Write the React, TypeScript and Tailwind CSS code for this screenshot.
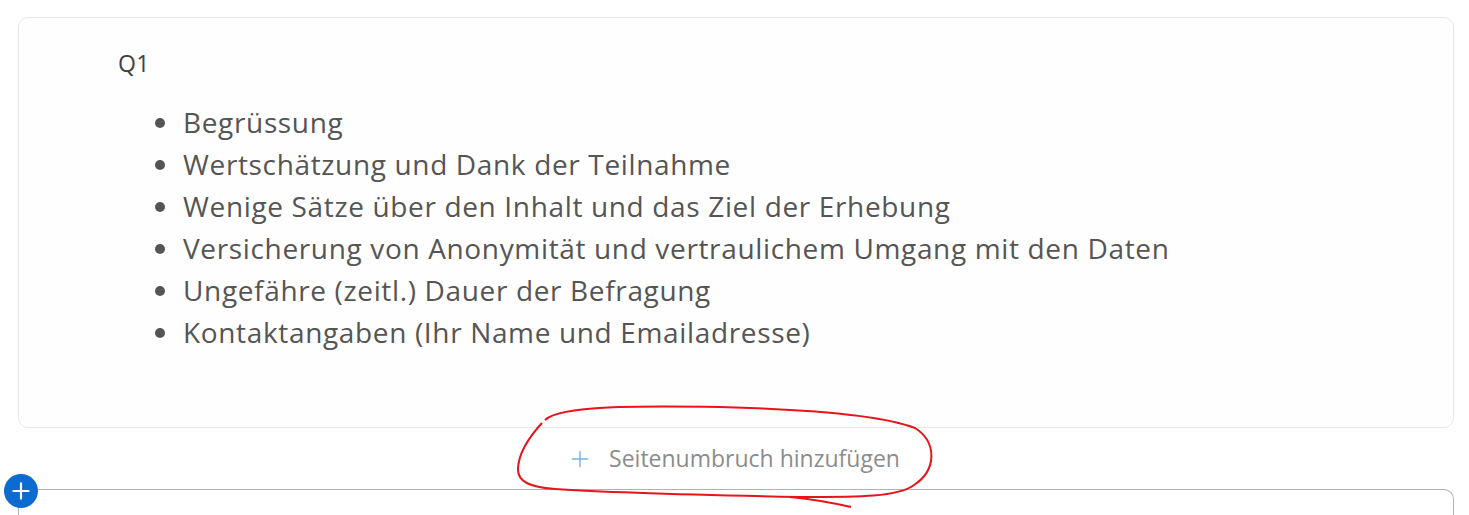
import { Plus } from "lucide-react";

const items = [
  "Begrüssung",
  "Wertschätzung und Dank der Teilnahme",
  "Wenige Sätze über den Inhalt und das Ziel der Erhebung",
  "Versicherung von Anonymität und vertraulichem Umgang mit den Daten",
  "Ungefähre (zeitl.) Dauer der Befragung",
  "Kontaktangaben (Ihr Name und Emailadresse)",
];

const App = () => {
  return (
    <div className="relative h-[515px] w-[1469px] overflow-hidden bg-white font-['Open_Sans',sans-serif]">
      <div className="flex flex-col pl-[18px] pr-[15px] pt-[17px]">
        <div className="h-[411px] rounded-[10px] border border-[#e8e8e8] bg-[#fefefe] pl-[99px] pt-[30px]">
          <div className="text-[23px] leading-[30px] tracking-[0.3px] text-[#404040]">Q1</div>
          <ul className="mt-[23px] list-disc pl-[64px] text-[28px] leading-[42px] tracking-[0.65px] text-[#555555] marker:text-[#555555]">
            {items.map((item) => (
              <li key={item} className="pl-[1px]">
                {item}
              </li>
            ))}
          </ul>
        </div>

        <div className="flex h-[61px] items-center justify-center pr-[5px]">
          <button className="flex items-center gap-[16px] text-[23px] text-[#8c8c8c]">
            <Plus size={26} strokeWidth={1.3} className="text-[#7aaee6]" />
            <span>Seitenumbruch hinzufügen</span>
          </button>
        </div>

        <div className="relative h-[40px] rounded-t-[10px] border border-b-0 border-[#aeb3b8] bg-white">
          <div className="absolute left-[-15px] top-[-16px] flex h-[34px] w-[34px] items-center justify-center rounded-full bg-[#0b6bd0]">
            <Plus size={26} strokeWidth={2} className="text-white" />
          </div>
        </div>
      </div>

      {/* red hand-drawn annotation */}
      <svg className="pointer-events-none absolute left-0 top-0" width="1469" height="515">
        <path
          d="M 545 420 C 560 405, 640 406, 720 407 C 800 409, 880 414, 915 428 C 937 442, 937 470, 914 485 C 898 497, 860 497, 800 497 C 700 495, 600 492, 555 489 C 530 487, 517 482, 518 468 C 519 452, 530 436, 542 423"
          fill="none"
          stroke="#e8141b"
          strokeWidth="2"
        />
        <path d="M 790 497 C 820 500, 838 504, 851 507" fill="none" stroke="#e8141b" strokeWidth="2" />
      </svg>
    </div>
  );
};

export default App;
